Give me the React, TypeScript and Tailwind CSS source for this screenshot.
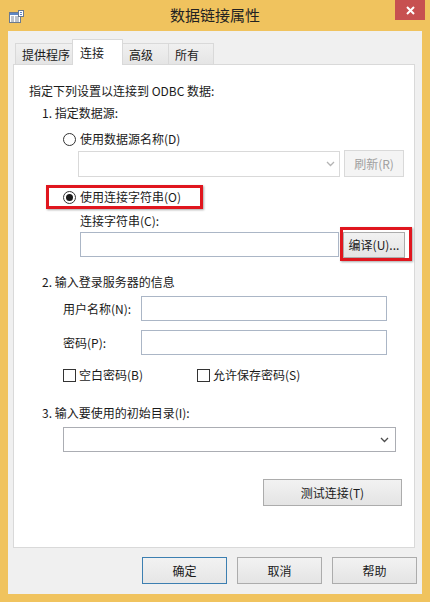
import React from 'react';

const font = { fontFamily: '"Microsoft YaHei", "Noto Sans CJK SC", "Noto Sans", sans-serif' };

function Chevron({ disabled }: { disabled?: boolean }) {
  return (
    <svg width="9" height="6" viewBox="0 0 9 6">
      <path d="M1 1 L4.5 4.5 L8 1" fill="none" stroke={disabled ? '#b4b4b4' : '#4d4d4d'} strokeWidth="1.3" />
    </svg>
  );
}

function Radio({ checked }: { checked?: boolean }) {
  return (
    <span className="w-[13px] h-[13px] rounded-full border border-[#333] bg-white flex items-center justify-center shrink-0">
      {checked && <span className="w-[7px] h-[7px] rounded-full bg-[#1a1a1a]" />}
    </span>
  );
}

function Check() {
  return <span className="w-[13px] h-[13px] border border-[#333] bg-white shrink-0" />;
}

function Button({ label, className = '', primary, disabled }: { label: string; className?: string; primary?: boolean; disabled?: boolean }) {
  const tone = disabled
    ? 'border-[#d9d9d9] bg-[#f4f4f4] text-[#a0a0a0]'
    : primary
    ? 'border-[#3c7fb1] bg-gradient-to-b from-[#f2f2f2] to-[#e6e6e6] text-[#1a1a1a]'
    : 'border-[#acacac] bg-gradient-to-b from-[#f2f2f2] to-[#e4e4e4] text-[#1a1a1a]';
  return (
    <div className={`border flex items-center justify-center text-[12px] shrink-0 ${tone} ${className}`}>
      {label}
    </div>
  );
}

const tabs = [
  { label: '提供程序', w: 'w-[58px]' },
  { label: '连接', w: 'w-[51px]', active: true },
  { label: '高级', w: 'w-[47px]' },
  { label: '所有', w: 'w-[46px]' },
];

export default function App() {
  return (
    <div className="w-[430px] h-[602px] bg-[#f0c35e] flex flex-col text-[#1a1a1a]" style={font}>
      {/* title bar */}
      <div className="h-[31px] flex items-start shrink-0">
        <div className="w-[40px] pl-[9px] pt-[10px]">
          <svg width="15" height="14" viewBox="0 0 15 14">
            <rect x="0.5" y="2.5" width="11" height="10" fill="#fff" stroke="#6b7a8f" />
            <rect x="1" y="3" width="10" height="2" fill="#5d86c4" />
            <path d="M2 7h3M2 9h3M2 11h3M6 7h4M6 9h4M6 11h4" stroke="#7c8796" strokeWidth="1" />
            <rect x="9.5" y="0.5" width="5" height="6" fill="#fff" stroke="#6b7a8f" />
            <path d="M11 2.5h2M11 4.5h2" stroke="#5d86c4" />
          </svg>
        </div>
        <div className="flex-1 text-center text-[15px] pt-[4px] text-[#222]">数据链接属性</div>
        <div className="w-[40px] flex justify-end pr-[5px]">
          <div className="w-[30px] h-[20px] bg-[#c75050] flex items-center justify-center">
            <svg width="9" height="9" viewBox="0 0 9 9">
              <path d="M1 1 L8 8 M8 1 L1 8" stroke="#fff" strokeWidth="2" />
            </svg>
          </div>
        </div>
      </div>

      {/* client area */}
      <div className="mx-[8px] mb-[8px] flex-1 bg-[#f0f0f0] px-[5px] pt-[8px] flex flex-col">
        {/* tabs */}
        <div className="flex items-end pl-[2px] h-[26px] relative z-10 -mb-px">
          {tabs.map((t) =>
            t.active ? (
              <div key={t.label} className={`${t.w} h-[26px] bg-white border border-b-0 border-[#d9d9d9] -ml-px text-[12px] pl-[7px] pt-[4px]`}>
                {t.label}
              </div>
            ) : (
              <div key={t.label} className={`${t.w} h-[22px] bg-gradient-to-b from-[#f0f0f0] to-[#e5e5e5] border border-[#d9d9d9] -ml-px first:ml-0 text-[12px] pl-[6px] pt-[2px]`}>
                {t.label}
              </div>
            )
          )}
        </div>

        {/* panel */}
        <div className="h-[484px] mr-[2px] bg-white border border-[#d9d9d9] flex flex-col text-[12px]">
          <div className="mt-[18px] h-[16px] leading-[16px] pl-[15px]">指定下列设置以连接到 ODBC 数据:</div>
          <div className="mt-[6px] h-[16px] leading-[16px] pl-[28px]">1. 指定数据源:</div>

          <div className="mt-[10px] h-[16px] pl-[49px] flex items-center gap-[4px]">
            <Radio />
            <span className="leading-[16px]">使用数据源名称(D)</span>
          </div>

          <div className="mt-[4px] h-[26px] pl-[64px] flex gap-[4px]">
            <div className="w-[262px] h-[26px] border border-[#d9d9d9] bg-white flex items-center justify-end pr-[4px]">
              <Chevron disabled />
            </div>
            <Button label="刷新(R)" disabled className="w-[60px] h-[27px] -mt-px" />
          </div>

          <div className="mt-[8px] h-[24px] ml-[32px] w-[157px] border-[3px] border-[#e0161e] flex items-center gap-[4px] pl-[14px] shadow-[1px_1px_2px_rgba(0,0,0,0.35)]">
            <Radio checked />
            <span className="leading-[16px]">使用连接字符串(O)</span>
          </div>

          <div className="mt-[4px] h-[16px] leading-[16px] pl-[66px]">连接字符串(C):</div>

          <div className="mt-[3px] h-[26px] pl-[66px] flex gap-[4px]">
            <div className="w-[259px] h-[25px] border border-[#abb6c6] bg-white" />
            <div className="relative w-[62px] h-[26px]">
              <Button label="编译(U)..." className="w-[62px] h-[26px]" />
              <span className="absolute -top-[5px] -left-[3px] w-[72px] h-[34px] border-[3px] border-[#e0161e] shadow-[1px_1px_2px_rgba(0,0,0,0.35)]" />
            </div>
          </div>

          <div className="mt-[16px] h-[16px] leading-[16px] pl-[28px]">2. 输入登录服务器的信息</div>

          <div className="mt-[6px] h-[25px] pl-[49px] flex items-center">
            <span className="w-[78px]">用户名称(N):</span>
            <div className="w-[246px] h-[25px] border border-[#abb6c6] bg-white" />
          </div>

          <div className="mt-[9px] h-[25px] pl-[49px] flex items-center">
            <span className="w-[78px]">密码(P):</span>
            <div className="w-[246px] h-[25px] border border-[#abb6c6] bg-white" />
          </div>

          <div className="mt-[12px] h-[16px] pl-[49px] flex items-center">
            <div className="w-[134px] flex items-center gap-[3px]">
              <Check />
              <span className="leading-[16px]">空白密码(B)</span>
            </div>
            <div className="flex items-center gap-[3px]">
              <Check />
              <span className="leading-[16px]">允许保存密码(S)</span>
            </div>
          </div>

          <div className="mt-[22px] h-[16px] leading-[16px] pl-[28px]">3. 输入要使用的初始目录(I):</div>

          <div className="mt-[6px] h-[25px] pl-[49px]">
            <div className="w-[333px] h-[25px] border border-[#abadb3] bg-white flex items-center justify-end pr-[6px]">
              <Chevron />
            </div>
          </div>

          <div className="mt-[27px] pl-[249px]">
            <Button label="测试连接(T)" className="w-[139px] h-[27px]" />
          </div>
        </div>

        {/* dialog buttons */}
        <div className="mt-[9px] flex justify-end gap-[10px]">
          <Button label="确定" primary className="w-[85px] h-[27px]" />
          <Button label="取消" className="w-[85px] h-[27px]" />
          <Button label="帮助" className="w-[85px] h-[27px]" />
        </div>
      </div>
    </div>
  );
}
